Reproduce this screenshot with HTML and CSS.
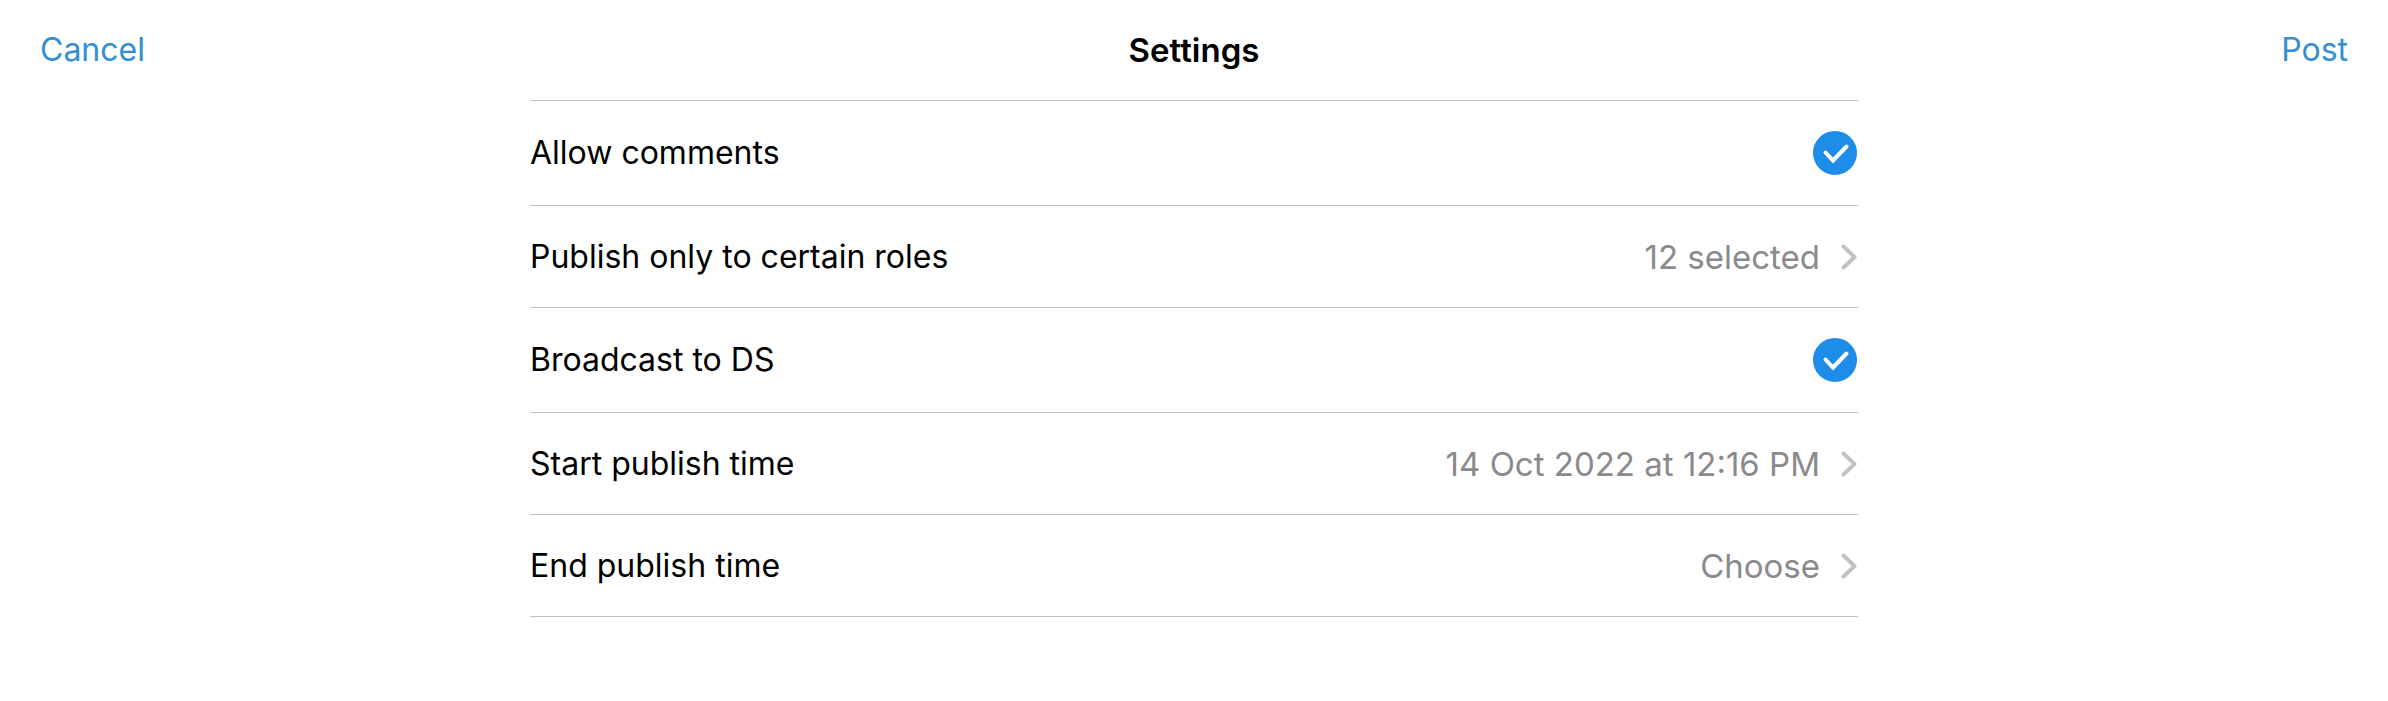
FILE: index.html
```html
<!doctype html>
<html lang="en">
<head>
	<meta charset="UTF-8">
	<meta name="viewport" content="width=device-width, initial-scale=1.0">
	<title>Settings</title>
	<link rel="stylesheet" href="styles.css">
</head>
<body>
<header class="header">
	<button type="button" class="btn cancel">Cancel</button>
	<h1 class="title">Settings</h1>
	<button type="button" class="btn post">Post</button>
</header>
<main class="main">
	<label class="row toggle">
		<span class="name">Allow comments</span>
		<span class="check">
			<input type="checkbox" checked>
			<svg viewBox="0 0 44 44"><path d="M12.5 21.5L20 29.5L33.5 15.5"/></svg>
		</span>
	</label>
	<button type="button" class="row">
		<span class="name">Publish only to certain roles</span>
		<span class="value">12 selected</span>
		<svg class="arrow" viewBox="0 0 18 26"><path d="M3.5 2.5L14.5 13L3.5 23.5"/></svg>
	</button>
	<label class="row toggle">
		<span class="name">Broadcast to DS</span>
		<span class="check">
			<input type="checkbox" checked>
			<svg viewBox="0 0 44 44"><path d="M12.5 21.5L20 29.5L33.5 15.5"/></svg>
		</span>
	</label>
	<button type="button" class="row">
		<span class="name">Start publish time</span>
		<span class="value">14 Oct 2022 at 12:16 PM</span>
		<svg class="arrow" viewBox="0 0 18 26"><path d="M3.5 2.5L14.5 13L3.5 23.5"/></svg>
	</button>
	<button type="button" class="row">
		<span class="name">End publish time</span>
		<span class="value">Choose</span>
		<svg class="arrow" viewBox="0 0 18 26"><path d="M3.5 2.5L14.5 13L3.5 23.5"/></svg>
	</button>
</main>
</body>
</html>
```

FILE: styles.css
```css
*
{
	box-sizing: border-box;
}

body
{
	margin: 0;
	background-color: #FFFFFF;
	color: #000000;
	font-family: Inter, "Liberation Sans", sans-serif;
	font-size: 32px;
	line-height: 40px;
}

button
{
	margin: 0;
	padding: 0;
	border: 0;
	background: none;
	color: inherit;
	font: inherit;
	cursor: pointer;
}

.header
{
	display: grid;
	grid-template-columns: 1fr auto 1fr;
	align-items: center;
	padding: 30px 40px;
}

.btn
{
	color: #338FD2;
}

.cancel
{
	justify-self: start;
}

.post
{
	justify-self: end;
}

.title
{
	margin: 0;
	font-size: 33px;
	font-weight: 600;
}

.main
{
	max-width: 1328px;
	margin: 0 auto;
	border-top: 1px solid #BEBEC0;
}

.row
{
	display: flex;
	align-items: center;
	width: 100%;
	padding: 31px 0 30px;
	border-bottom: 1px solid #BEBEC0;
	text-align: left;
}

.toggle
{
	padding: 30px 0;
	cursor: pointer;
}

.name
{
	flex: 1;
}

.value
{
	color: #8A8A8D;
	font-size: 33px;
}

.arrow
{
	width: 18px;
	height: 26px;
	margin-left: 20px;
	fill: none;
	stroke: #C2C2C4;
	stroke-width: 4;
	stroke-linecap: round;
	stroke-linejoin: round;
}

/* tick is stacked over the round checkbox */
.check
{
	display: grid;
	width: 44px;
	height: 44px;
	margin-right: 1px;
}

.check input,
.check svg
{
	grid-area: 1 / 1;
	width: 44px;
	height: 44px;
	margin: 0;
}

.check input
{
	appearance: none;
	border: 2px solid #BEBEC0;
	border-radius: 50%;
	cursor: pointer;
}

.check input:checked
{
	border-color: #1E8CE9;
	background-color: #1E8CE9;
}

.check svg
{
	fill: none;
	stroke: #FFFFFF;
	stroke-width: 4;
	stroke-linecap: round;
	pointer-events: none;
}
```
